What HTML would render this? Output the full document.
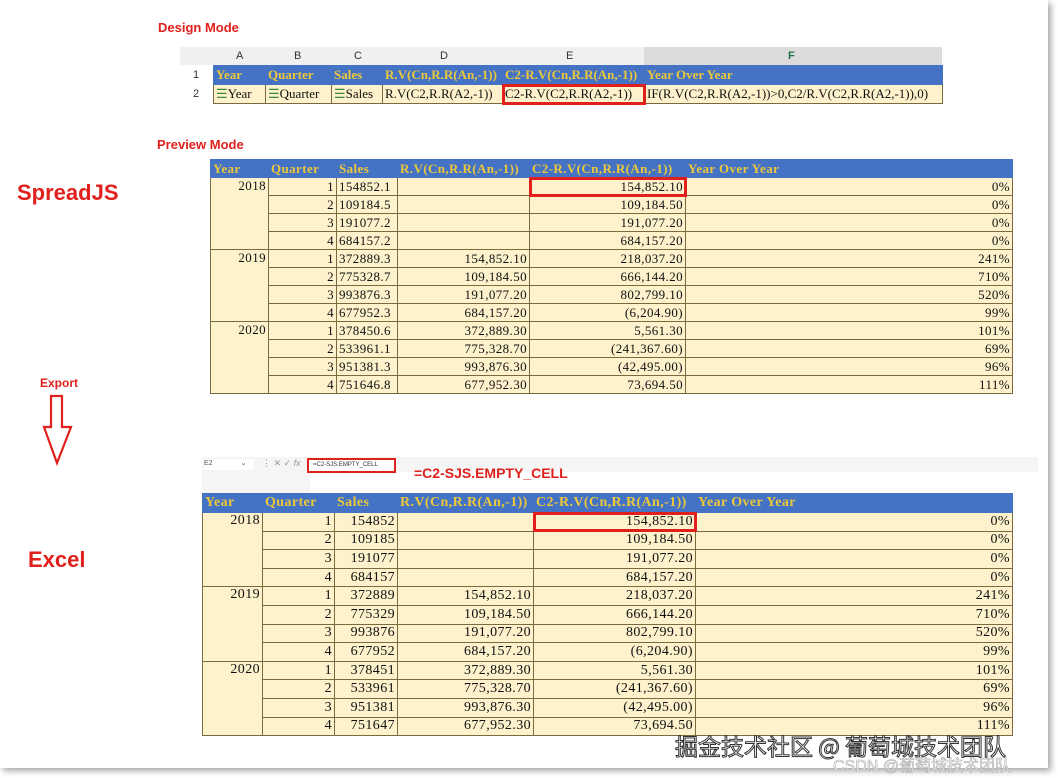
<!DOCTYPE html>
<html><head><meta charset="utf-8"><style>
body{margin:0;width:1058px;height:778px;background:#fff;position:relative;overflow:hidden;font-family:"Liberation Serif",serif}
.card{position:absolute;left:0;top:0;width:1048px;height:768px;background:#fff;box-shadow:3px 3px 6px rgba(0,0,0,.35)}
.lbl{position:absolute;font-family:"Liberation Sans",sans-serif;font-weight:bold;color:#e0201c;white-space:nowrap}
table{position:absolute;border-collapse:collapse;table-layout:fixed;letter-spacing:0.4px}
td{padding:0 2px;white-space:nowrap;overflow:hidden;border:1px solid #7a6a40;background:#fdf2cc;color:#111}
tr.h td{background:#4472c4;color:#ecc83a;font-weight:bold;border-color:#4472c4;text-align:left}
.r{text-align:right}
.red{outline:3px solid #e0201c;outline-offset:-2px}
</style></head><body>
<div class="card"></div>
<div class="lbl" style="left:158px;top:20px;font-size:13px">Design Mode</div>
<div class="lbl" style="left:157px;top:137px;font-size:13px">Preview Mode</div>
<div class="lbl" style="left:17px;top:180px;font-size:22px">SpreadJS</div>
<div class="lbl" style="left:28px;top:547px;font-size:22px">Excel</div>
<div class="lbl" style="left:40px;top:376px;font-size:12px">Export</div>
<svg style="position:absolute;left:40px;top:394px" width="36" height="72"><path d="M11 2H22V33H31L17 69L4 33H11Z" fill="none" stroke="#e0201c" stroke-width="2.2"/></svg>

<!-- design mode -->
<div style="position:absolute;left:180px;top:47px;width:762px;height:18px;background:#f0f0f0;font:11px 'Liberation Sans',sans-serif;color:#333">
<span style="position:absolute;left:56px;top:3px">A</span><span style="position:absolute;left:114px;top:3px">B</span><span style="position:absolute;left:174px;top:3px">C</span><span style="position:absolute;left:260px;top:3px">D</span><span style="position:absolute;left:386px;top:3px">E</span>
<div style="position:absolute;left:464px;top:0;width:298px;height:18px;background:#dcdcdc"></div><span style="position:absolute;left:608px;top:3px;color:#217346;font-weight:bold">F</span></div>
<div style="position:absolute;left:180px;top:65px;width:33px;height:45px;font:11px 'Liberation Sans',sans-serif;color:#333"><span style="position:absolute;left:13px;top:4px">1</span><span style="position:absolute;left:13px;top:23px">2</span></div>
<table style="left:213px;top:65px;width:729px;font-size:13px;letter-spacing:0">
<colgroup><col style="width:52px"><col style="width:66px"><col style="width:51px"><col style="width:120px"><col style="width:142px"><col style="width:298px"></colgroup>
<tr class="h" style="height:19px"><td>Year</td><td>Quarter</td><td>Sales</td><td>R.V(Cn,R.R(An,-1))</td><td>C2-R.V(Cn,R.R(An,-1))</td><td>Year Over Year</td></tr>
<tr style="height:19px"><td><span style="color:#3a8a3a">☰</span>Year</td><td><span style="color:#3a8a3a">☰</span>Quarter</td><td><span style="color:#3a8a3a">☰</span>Sales</td><td>R.V(C2,R.R(A2,-1))</td><td class="red">C2-R.V(C2,R.R(A2,-1))</td><td>IF(R.V(C2,R.R(A2,-1))&gt;0,C2/R.V(C2,R.R(A2,-1)),0)</td></tr>
</table>

<!-- preview -->
<table style="left:210px;top:159px;width:802px;font-size:13px">
<colgroup><col style="width:58px"><col style="width:68px"><col style="width:61px"><col style="width:132px"><col style="width:156px"><col style="width:327px"></colgroup>
<tr class="h" style="height:18px"><td>Year</td><td>Quarter</td><td>Sales</td><td>R.V(Cn,R.R(An,-1))</td><td>C2-R.V(Cn,R.R(An,-1))</td><td>Year Over Year</td></tr>
<tr style="height:18px"><td rowspan="4" class="r" style="vertical-align:top">2018</td><td class="r">1</td><td>154852.1</td><td></td><td class="r red">154,852.10</td><td class="r">0%</td></tr>
<tr style="height:18px"><td class="r">2</td><td>109184.5</td><td></td><td class="r">109,184.50</td><td class="r">0%</td></tr>
<tr style="height:18px"><td class="r">3</td><td>191077.2</td><td></td><td class="r">191,077.20</td><td class="r">0%</td></tr>
<tr style="height:18px"><td class="r">4</td><td>684157.2</td><td></td><td class="r">684,157.20</td><td class="r">0%</td></tr>
<tr style="height:18px"><td rowspan="4" class="r" style="vertical-align:top">2019</td><td class="r">1</td><td>372889.3</td><td class="r">154,852.10</td><td class="r">218,037.20</td><td class="r">241%</td></tr>
<tr style="height:18px"><td class="r">2</td><td>775328.7</td><td class="r">109,184.50</td><td class="r">666,144.20</td><td class="r">710%</td></tr>
<tr style="height:18px"><td class="r">3</td><td>993876.3</td><td class="r">191,077.20</td><td class="r">802,799.10</td><td class="r">520%</td></tr>
<tr style="height:18px"><td class="r">4</td><td>677952.3</td><td class="r">684,157.20</td><td class="r">(6,204.90)</td><td class="r">99%</td></tr>
<tr style="height:18px"><td rowspan="4" class="r" style="vertical-align:top">2020</td><td class="r">1</td><td>378450.6</td><td class="r">372,889.30</td><td class="r">5,561.30</td><td class="r">101%</td></tr>
<tr style="height:18px"><td class="r">2</td><td>533961.1</td><td class="r">775,328.70</td><td class="r">(241,367.60)</td><td class="r">69%</td></tr>
<tr style="height:18px"><td class="r">3</td><td>951381.3</td><td class="r">993,876.30</td><td class="r">(42,495.00)</td><td class="r">96%</td></tr>
<tr style="height:18px"><td class="r">4</td><td>751646.8</td><td class="r">677,952.30</td><td class="r">73,694.50</td><td class="r">111%</td></tr>
</table>

<!-- excel formula bar -->
<div style="position:absolute;left:202px;top:457px;width:836px;height:36px;background:#f5f5f5"></div>
<div style="position:absolute;left:310px;top:472px;width:728px;height:21px;background:#fff"></div>
<div style="position:absolute;left:204px;top:459px;width:50px;height:11px;background:#fff;font:7px 'Liberation Sans',sans-serif;color:#555">E2 <span style="margin-left:26px">⌄</span></div>
<div style="position:absolute;left:262px;top:458px;font:9px 'Liberation Sans',sans-serif;color:#999">⋮ ✕ ✓ <i>fx</i></div>
<div style="position:absolute;left:307px;top:458px;width:81px;height:11px;border:2px solid #e0201c;background:#fff;font:6px 'Liberation Sans',sans-serif;color:#333;line-height:11px;padding-left:4px">=C2-SJS.EMPTY_CELL</div>
<div class="lbl" style="left:414px;top:465px;font-size:14px">=C2-SJS.EMPTY_CELL</div>

<!-- excel -->
<table style="left:202px;top:493px;width:810px;font-size:14px">
<colgroup><col style="width:60px"><col style="width:72px"><col style="width:63px"><col style="width:136px"><col style="width:162px"><col style="width:317px"></colgroup>
<tr class="h" style="height:19px"><td>Year</td><td>Quarter</td><td>Sales</td><td>R.V(Cn,R.R(An,-1))</td><td>C2-R.V(Cn,R.R(An,-1))</td><td>Year Over Year</td></tr>
<tr style="height:18.6px"><td rowspan="4" class="r" style="vertical-align:top">2018</td><td class="r">1</td><td class="r">154852</td><td></td><td class="r red">154,852.10</td><td class="r">0%</td></tr>
<tr style="height:18.6px"><td class="r">2</td><td class="r">109185</td><td></td><td class="r">109,184.50</td><td class="r">0%</td></tr>
<tr style="height:18.6px"><td class="r">3</td><td class="r">191077</td><td></td><td class="r">191,077.20</td><td class="r">0%</td></tr>
<tr style="height:18.6px"><td class="r">4</td><td class="r">684157</td><td></td><td class="r">684,157.20</td><td class="r">0%</td></tr>
<tr style="height:18.6px"><td rowspan="4" class="r" style="vertical-align:top">2019</td><td class="r">1</td><td class="r">372889</td><td class="r">154,852.10</td><td class="r">218,037.20</td><td class="r">241%</td></tr>
<tr style="height:18.6px"><td class="r">2</td><td class="r">775329</td><td class="r">109,184.50</td><td class="r">666,144.20</td><td class="r">710%</td></tr>
<tr style="height:18.6px"><td class="r">3</td><td class="r">993876</td><td class="r">191,077.20</td><td class="r">802,799.10</td><td class="r">520%</td></tr>
<tr style="height:18.6px"><td class="r">4</td><td class="r">677952</td><td class="r">684,157.20</td><td class="r">(6,204.90)</td><td class="r">99%</td></tr>
<tr style="height:18.6px"><td rowspan="4" class="r" style="vertical-align:top">2020</td><td class="r">1</td><td class="r">378451</td><td class="r">372,889.30</td><td class="r">5,561.30</td><td class="r">101%</td></tr>
<tr style="height:18.6px"><td class="r">2</td><td class="r">533961</td><td class="r">775,328.70</td><td class="r">(241,367.60)</td><td class="r">69%</td></tr>
<tr style="height:18.6px"><td class="r">3</td><td class="r">951381</td><td class="r">993,876.30</td><td class="r">(42,495.00)</td><td class="r">96%</td></tr>
<tr style="height:18.6px"><td class="r">4</td><td class="r">751647</td><td class="r">677,952.30</td><td class="r">73,694.50</td><td class="r">111%</td></tr>
</table>

<div style="position:absolute;left:675px;top:728px;font:23px 'Noto Sans CJK SC',sans-serif;color:#fff;-webkit-text-stroke:1px #333;white-space:nowrap">掘金技术社区 @ 葡萄城技术团队</div>
<div style="position:absolute;left:833px;top:752px;font:16px 'Liberation Sans','Noto Sans CJK SC',sans-serif;color:#fff;-webkit-text-stroke:.6px #aaa;white-space:nowrap">CSDN @葡萄城技术团队</div>
</body></html>
